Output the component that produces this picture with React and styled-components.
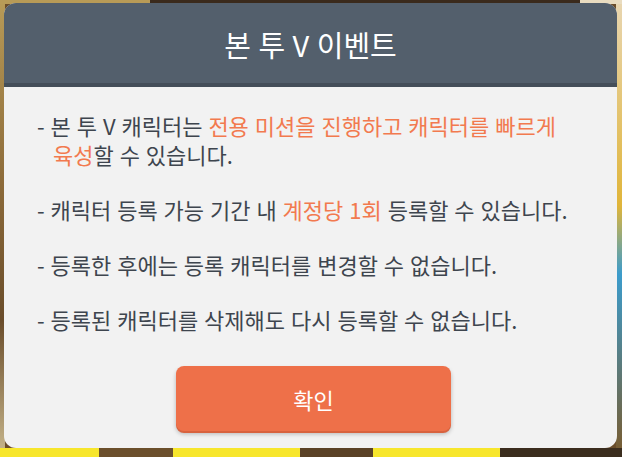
import React from "react";
import styled, { createGlobalStyle } from "styled-components";

const GlobalStyle = createGlobalStyle`
  html, body {
    margin: 0;
    padding: 0;
  }
  body {
    width: 622px;
    height: 457px;
    overflow: hidden;
    font-family: "Noto Sans CJK KR", "Noto Sans", sans-serif;
    background:
      linear-gradient(to right,
        #f7e62c 0, #f7e62c 99px,
        #6b4f2c 99px, #6b4f2c 173px,
        #f7e62c 173px, #f7e62c 300px,
        #5a4126 300px, #5a4126 373px,
        #f7e62c 373px, #f7e62c 500px,
        #3b2d1e 500px) bottom / 100% 9px no-repeat,
      linear-gradient(to right,
        #b89b57 0, #b89b57 150px,
        #3a2a1c 150px, #3a2a1c 580px,
        #e9dcc0 580px) top / 100% 4px no-repeat,
      linear-gradient(to bottom, #b89b57 0, #8d6b3a 40%, #6a4d2b 70%, #c9b88e 100%) left / 5px 100% no-repeat,
      linear-gradient(to bottom, #e8d6b2 0, #e0b53a 45%, #3c9ccc 60%, #7a5a2c 100%) right / 6px 100% no-repeat,
      #6a4d2b;
  }
`;

const Page = styled.div`
  box-sizing: border-box;
  height: 457px;
  padding: 3px 5px 9px 4px;
  display: flex;
`;

const Dialog = styled.div`
  flex: 1;
  display: flex;
  flex-direction: column;
  border-radius: 12px;
  overflow: hidden;
  background: #f2f2f2;
`;

const Header = styled.div`
  height: 80px;
  display: flex;
  align-items: center;
  justify-content: center;
  background: #535f6c;
  border-bottom: 4px solid #444e59;
`;

const Title = styled.h1`
  margin: 2px 0 0;
  font-size: 29px;
  font-weight: 400;
  color: #ffffff;
  word-spacing: 1px;
`;

const Body = styled.div`
  flex: 1;
  display: flex;
  flex-direction: column;
  padding: 24px 30px 17px 33px;
`;

const Notice = styled.ul`
  list-style: none;
  margin: 0;
  padding: 0;
  display: flex;
  flex-direction: column;
  gap: 26px;
`;

const Item = styled.li`
  font-size: 22px;
  line-height: 29px;
  color: #3e454e;
  word-spacing: 1px;
  word-break: keep-all;
  padding-left: 16px;
  text-indent: -16px;
`;

const Accent = styled.span`
  color: #f27a4f;
`;

const Footer = styled.div`
  margin-top: auto;
  display: flex;
  justify-content: center;
`;

const ConfirmButton = styled.button`
  width: 275px;
  height: 65px;
  margin-left: 3px;
  border: none;
  border-radius: 8px;
  background: #ee7049;
  box-shadow: 0 2px 0 #d8623e, 0 3px 4px rgba(0, 0, 0, 0.25);
  color: #ffffff;
  font-family: inherit;
  font-size: 22px;
  font-weight: 400;
  cursor: pointer;
`;

export default function App() {
  return (
    <>
      <GlobalStyle />
      <Page>
        <Dialog>
          <Header>
            <Title>본 투 V 이벤트</Title>
          </Header>
          <Body>
            <Notice>
              <Item>
                - 본 투 V 캐릭터는 <Accent>전용 미션을 진행하고 캐릭터를 빠르게 육성</Accent>할 수 있습니다.
              </Item>
              <Item>
                - 캐릭터 등록 가능 기간 내 <Accent>계정당 1회</Accent> 등록할 수 있습니다.
              </Item>
              <Item>- 등록한 후에는 등록 캐릭터를 변경할 수 없습니다.</Item>
              <Item>- 등록된 캐릭터를 삭제해도 다시 등록할 수 없습니다.</Item>
            </Notice>
            <Footer>
              <ConfirmButton>확인</ConfirmButton>
            </Footer>
          </Body>
        </Dialog>
      </Page>
    </>
  );
}
